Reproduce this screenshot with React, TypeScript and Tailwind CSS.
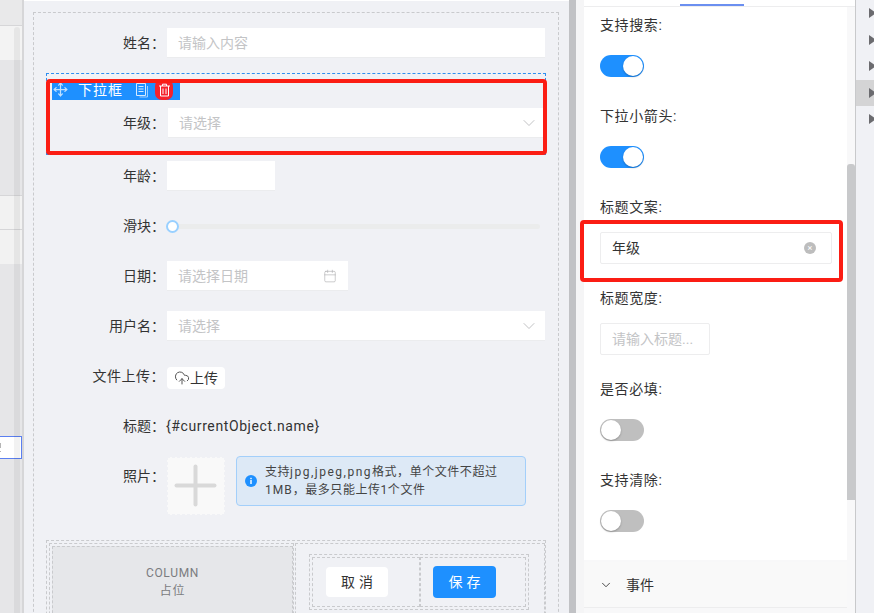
import { CloudUpload, Calendar, ChevronDown, Move } from 'lucide-react';

const font = "font-['Roboto','Noto_Sans_CJK_SC',sans-serif]";

function Field({ label, children, className = '', labelClass = '' }: { label: string; children: React.ReactNode; className?: string; labelClass?: string }) {
  return (
    <div className={`flex items-start ${className}`}>
      <div className={`w-[121px] shrink-0 pr-[2px] text-right text-sm leading-[30px] text-[#333] ${labelClass}`}>{label}</div>
      {children}
    </div>
  );
}

function Placeholder({ text }: { text: string }) {
  return <span className="text-sm text-[#c3c4c6]">{text}</span>;
}

function Input({ text, icon, className = '' }: { text: string; icon?: React.ReactNode; className?: string }) {
  return (
    <div className={`flex h-[30px] items-center justify-between border-b border-[#ebecee] bg-white pl-[11px] pr-[11px] ${className}`}>
      <Placeholder text={text} />
      {icon}
    </div>
  );
}

function Toggle({ on }: { on: boolean }) {
  return (
    <div className={`flex h-[22px] w-11 items-center rounded-full px-px ${on ? 'justify-end bg-[#1e90ff]' : 'justify-start bg-[#bfbfbf]'}`}>
      <div className="h-5 w-5 rounded-full bg-white shadow-[0_1px_2px_rgba(0,0,0,0.25)]" />
    </div>
  );
}

function SettingLabel({ text, className = '' }: { text: string; className?: string }) {
  return <div className={`text-sm leading-5 tracking-[0.6px] text-[#333] ${className}`}>{text}</div>;
}

function Triangle() {
  return <div className="h-0 w-0 border-y-[5px] border-l-[7px] border-y-transparent border-l-[#6b6b6f]" />;
}

function SelectArrow() {
  return <ChevronDown size={20} strokeWidth={1} className="-mr-[5px] text-[#b5b6b8]" />;
}

function LeftRail() {
  const grey = 'bg-[#e6e6e8]';
  return (
    <div className="relative h-full w-[22px] shrink-0">
      <div className="h-[26px] border-b border-[#d6d6d8] bg-[#e9e9ea]" />
      <div className="h-[34px] bg-[#f3f3f3]" />
      <div className={`h-[136px] border-b border-[#d6d6d8] ${grey}`} />
      <div className="h-[34px] border-b border-[#d6d6d8] bg-[#f2f2f2]" />
      <div className="h-[34px] bg-[#f2f2f2]" />
      <div className={`h-[172px] ${grey}`} />
      <div className="flex h-[23px] flex-col items-end justify-center border-y border-r border-[#5b7ff0] bg-white pr-[20px]">
        <span className="h-[5px] w-[3px] bg-[#b5b5b5]" />
        <span className="mt-[3px] h-px w-[3px] bg-[#b5b5b5]" />
      </div>
      <div className={`h-[154px] ${grey}`} />
      <div className="absolute bottom-0 left-[14px] top-[27px] w-[6px] rounded-t-[3px] bg-black/5" />
    </div>
  );
}

function FormCanvas() {
  return (
    <div className="h-full w-[545px] shrink-0 overflow-hidden border-t border-white bg-[#f0f1f5] pl-[9px] pt-[11px]">
      <div className="h-[640px] w-[526px] border border-dashed border-[#c9cacd] pl-3 pr-3 pt-[15px]">
        <Field label="姓名：">
          <Input text="请输入内容" className="w-[378px]" />
        </Field>

        <div className="mt-[15px] h-[82px] border border-dashed border-[#2f8ff0] pl-[5px] pt-[5px]">
          <div className="flex h-[21px] w-[128px] items-center bg-[#1e90ff] text-white">
            <Move size={15} strokeWidth={2} className="ml-[1px] text-[#bfe0ff]" />
            <span className="ml-[10px] text-sm leading-none tracking-[1px]">下拉框</span>
            <svg width="16" height="16" viewBox="0 0 16 16" fill="none" className="ml-[11px] text-[#d5eaff]">
              <path d="M2.5 1.5h9v12h-9z M4.5 4.5h5 M4.5 7h5 M4.500 9.500h5" stroke="currentColor" strokeWidth="1" />
              <path d="M13.5 4v11h-8" stroke="currentColor" strokeWidth="1" opacity=".7" />
            </svg>
            <div className="ml-[5px] flex h-[21px] w-[18px] items-center justify-center rounded-[7px] bg-[#f5222d]">
              <svg width="13" height="14" viewBox="0 0 13 14" fill="none" stroke="white" strokeWidth="1">
                <path d="M1 3h11 M4.5 3V1.2h4V3 M2.5 3v10h8V3 M5 5.5v5.5 M8 5.500v5.500" />
              </svg>
            </div>
          </div>
          <div className="mt-2 flex items-start">
            <div className="w-[116px] shrink-0 pr-[3px] text-right text-sm leading-[30px] text-[#333]">年级：</div>
            <Input text="请选择" className="w-[377px]" icon={<SelectArrow />} />
          </div>
        </div>

        <Field label="年龄：" className="mt-[6px]">
          <Input text="" className="w-[108px]" />
        </Field>

        <Field label="滑块：" className="mt-5">
          <div className="-ml-px flex h-[30px] w-[374px] items-center">
            <div className="h-[13px] w-[13px] shrink-0 rounded-full border-2 border-[#99d0ff] bg-white" />
            <div className="h-[5px] flex-1 rounded-r-full bg-[#ebecec]" />
          </div>
        </Field>

        <Field label="日期：" className="mt-5">
          <Input text="请选择日期" className="w-[181px]" icon={<Calendar size={14} strokeWidth={1} className="text-[#a8a9ab]" />} />
        </Field>

        <Field label="用户名：" className="mt-5">
          <Input text="请选择" className="w-[378px]" icon={<SelectArrow />} />
        </Field>

        <Field label="文件上传：" className="mt-5" labelClass="tracking-[0.5px]">
          <div className="mt-[6px] flex h-[22px] w-[58px] items-center justify-center rounded-sm bg-white text-sm text-[#333]">
            <CloudUpload size={16} strokeWidth={1.5} className="text-[#555]" />
            <span>上传</span>
          </div>
        </Field>

        <Field label="标题：" className="mt-5">
          <div className="-ml-px text-sm leading-[30px] tracking-[0.6px] text-[#333]">{'{#currentObject.name}'}</div>
        </Field>

        <div className="mt-[15px] flex items-start">
          <div className="mt-[5px] w-[121px] shrink-0 pr-[2px] text-right text-sm leading-[30px] text-[#333]">照片：</div>
          <div className="mt-px flex h-[58px] w-[58px] shrink-0 items-center justify-center border border-dashed border-[#f0f1f5] bg-[#f9f9f9]">
            <svg width="44" height="44" viewBox="0 0 44 44">
              <rect x="0.500" y="19.500" width="42" height="4" rx="2" fill="#d9d9d9" />
              <rect x="19.500" y="0.500" width="4" height="42" rx="2" fill="#d9d9d9" />
            </svg>
          </div>
          <div className="ml-[11px] flex h-[50px] w-[290px] items-center rounded border border-[#a3cffa] bg-[#dde9f6] pl-2 pr-2">
            <svg width="12" height="12" viewBox="0 0 12 12" className="mr-2 shrink-0">
              <circle cx="6" cy="6" r="6" fill="#1e90ff" />
              <rect x="5.300" y="5" width="1.400" height="4" fill="white" />
              <rect x="5.300" y="2.800" width="1.400" height="1.400" fill="white" />
            </svg>
            <div className="text-xs leading-[18px] tracking-[0.55px] text-[#444]">
              支持<span className="tracking-[1.5px]">jpg,jpeg,png</span>格式，单个文件不超过
              <br />
              <span className="tracking-[1px]">1MB</span>，最多只能上传1个文件
            </div>
          </div>
        </div>

        <div className="mt-[25px] flex h-[90px] border border-dashed border-[#c9cacd] pl-[2px] pt-[2px]">
          <div className="h-full w-[245px] shrink-0 border border-dashed border-[#c9cacd] pl-[2px] pt-[2px]">
            <div className="h-full w-[241px] border border-dashed border-[#c9cacd] bg-[#e6e7ea] pt-[17px] text-center text-xs leading-[18px] tracking-[0.7px] text-[#7b7c80]">
              <div>COLUMN</div>
              <div>占位</div>
            </div>
          </div>
          <div className="ml-px h-full w-[251px] border border-dashed border-[#c9cacd] pl-[13px] pt-[10px]">
            <div className="flex h-[56px] w-[220px] border border-dashed border-[#c9cacd] p-[2px]">
              <div className="flex h-[50px] w-[108px] shrink-0 items-center border border-dashed border-[#c9cacd] pl-[13px]">
                <div className="flex h-[30px] w-[62px] items-center justify-center rounded bg-white pl-1 text-sm tracking-[4px] text-[#333]">取消</div>
              </div>
              <div className="flex h-[50px] flex-1 items-center border border-dashed border-[#c9cacd] pl-[12px]">
                <div className="flex h-8 w-[63px] items-center justify-center rounded bg-[#1e90ff] pl-1 text-sm tracking-[4px] text-white">保存</div>
              </div>
            </div>
          </div>
        </div>
      </div>
    </div>
  );
}

function SettingsPanel() {
  return (
    <div className="flex h-full w-[272px] shrink-0 flex-col border-r border-[#c8c9cb] bg-[#f8f8f9]">
      <div className="h-[7px] shrink-0 border-b border-[#ededee] bg-white pl-[96px]">
        <div className="mt-[4px] h-[2px] w-16 bg-[#6b8ff0]" />
      </div>
      <div className="flex min-h-0 flex-1">
        <div className="w-[263px] shrink-0">
          <div className="h-[553px] bg-white pl-4 pt-[8px] pr-[15px]">
            <SettingLabel text="支持搜索:" />
            <div className="mt-5"><Toggle on /></div>
            <SettingLabel text="下拉小箭头:" className="mt-[29px]" />
            <div className="mt-5"><Toggle on /></div>
            <SettingLabel text="标题文案:" className="mt-[29px]" />
            <div className="mt-[15px] flex h-8 w-[232px] items-center justify-between rounded-[2px] border border-[#ededee] pl-[11px] pr-[15px] text-sm text-[#333]">
              <span>年级</span>
              <div className="flex h-3 w-3 items-center justify-center rounded-full bg-[#bdbdbd] text-[9px] leading-none text-white">×</div>
            </div>
            <SettingLabel text="标题宽度:" className="mt-6" />
            <div className="mt-[15px] flex h-8 w-[110px] items-center rounded-[2px] border border-[#ededee] pl-[11px] text-sm text-[#c3c4c6]">请输入标题...</div>
            <SettingLabel text="是否必填:" className="mt-[24px]" />
            <div className="mt-5"><Toggle on={false} /></div>
            <SettingLabel text="支持清除:" className="mt-[29px]" />
            <div className="mt-5"><Toggle on={false} /></div>
          </div>
          <div className="mt-[2px] flex h-[46px] items-center border-b border-[#ededee] bg-[#f9f9f9] pl-[15px] text-sm text-[#333]">
            <ChevronDown size={14} strokeWidth={1.5} className="text-[#333]" />
            <span className="ml-[13px]">事件</span>
          </div>
        </div>
        <div className="relative flex-1 bg-[#f8f8f9]">
          <div className="absolute left-0 top-[157px] h-[336px] w-2 rounded-t-[3px] bg-[#c8c9cb]" />
        </div>
      </div>
    </div>
  );
}

function RightRail() {
  return (
    <div className="flex h-full flex-1 flex-col bg-[#f0f1f5]">
      {[0, 1, 2, 3, 4].map((i) => (
        <div key={i} className={`flex h-[26.5px] items-center pl-[13px] ${i === 3 ? 'bg-[#d4d4d5]' : ''}`}>
          <Triangle />
        </div>
      ))}
    </div>
  );
}

export default function App() {
  return (
    <div className={`relative flex h-[613px] w-[874px] overflow-hidden bg-white ${font}`}>
      <LeftRail />
      <div className="h-full w-[2px] shrink-0 bg-[#d6d6d8]" />
      <FormCanvas />
      <div className="h-full w-[7px] shrink-0 bg-[#c1c2c5]" />
      <div className="h-full w-[8px] shrink-0 bg-[#f5f5f6]" />
      <SettingsPanel />
      <RightRail />
      {/* red annotation boxes */}
      <div className="pointer-events-none absolute left-[46px] top-[79px] h-[76px] w-[501px] rounded-[4px] border-4 border-[#fb1d14]" />
      <div className="pointer-events-none absolute left-[580px] top-[220px] h-[62px] w-[263px] rounded-[4px] border-4 border-[#fb1d14]" />
    </div>
  );
}
